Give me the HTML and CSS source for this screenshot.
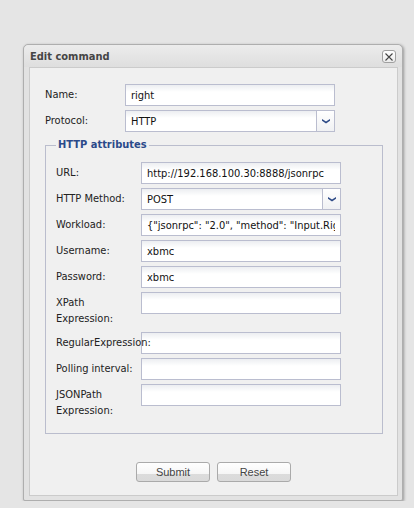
FILE: index.html
```html
<!DOCTYPE html>
<html>
<head>
<meta charset="utf-8">
<link rel="stylesheet" href="styles.css">
</head>
<body>
<div class="dialog">
  <div class="titlebar">
    <span class="title">Edit command</span>
    <span class="close"><svg width="8" height="8" viewBox="0 0 8 8"><path d="M0.5 0.5 L7.5 7.5 M7.5 0.5 L0.5 7.5" stroke="#444" stroke-width="1.1" fill="none"/></svg></span>
  </div>
  <div class="content">
    <div class="row top-row"><label class="lbl lbl-top">Name:</label><input class="field field-top" value="right"></div>
    <div class="row top-row"><label class="lbl lbl-top">Protocol:</label>
      <div class="field field-top select"><span class="sel-text">HTTP</span><span class="sel-btn"><svg width="8" height="5" viewBox="0 0 8 5"><path d="M0 0 L4 2.6 L8 0 L8 1.8 L4 4.6 L0 1.8 Z" fill="#2d4a86"/></svg></span></div>
    </div>
    <fieldset class="group">
      <legend class="legend">HTTP attributes</legend>
      <div class="row"><label class="lbl">URL:</label><input class="field" value="http://192.168.100.30:8888/jsonrpc"></div>
      <div class="row"><label class="lbl">HTTP Method:</label>
        <div class="field select"><span class="sel-text">POST</span><span class="sel-btn"><svg width="8" height="5" viewBox="0 0 8 5"><path d="M0 0 L4 2.6 L8 0 L8 1.8 L4 4.6 L0 1.8 Z" fill="#2d4a86"/></svg></span></div>
      </div>
      <div class="row"><label class="lbl">Workload:</label><input class="field" value='{"jsonrpc": "2.0", "method": "Input.Right", "id": 1}'></div>
      <div class="row"><label class="lbl">Username:</label><input class="field" value="xbmc"></div>
      <div class="row"><label class="lbl">Password:</label><input class="field" value="xbmc"></div>
      <div class="row"><label class="lbl lbl-wrap">XPath Expression:</label><input class="field" value=""></div>
      <div class="row"><label class="lbl lbl-over">RegularExpression:</label><input class="field" value=""></div>
      <div class="row"><label class="lbl">Polling interval:</label><input class="field" value=""></div>
      <div class="row last"><label class="lbl lbl-wrap">JSONPath Expression:</label><input class="field" value=""></div>
    </fieldset>
    <div class="buttons">
      <button class="btn">Submit</button>
      <button class="btn">Reset</button>
    </div>
  </div>
</div>
</body>
</html>
```
FILE: styles.css
```css
* { box-sizing: border-box; }
html, body { margin: 0; padding: 0; }
body {
  background: #e5e5e5;
  padding: 44px 0 0 23px;
  font-family: "DejaVu Sans Condensed", "DejaVu Sans", sans-serif;
  font-stretch: condensed;
  font-size: 11px;
  color: #222;
}
.dialog {
  width: 380px;
  height: 457px;
  background: #e2e2e2;
  border: 1px solid #aeaeae;
  border-radius: 5px 5px 2px 2px;
  box-shadow: 1px 1px 3px rgba(0,0,0,0.35);
  padding: 0 4px 4px 5px;
  display: flex;
  flex-direction: column;
}
.titlebar {
  height: 22px;
  flex: none;
  display: flex;
  align-items: center;
  justify-content: space-between;
  margin: 0 -4px 0 -5px;
  padding: 0 6px 0 6px;
  background: linear-gradient(#ececec, #dedede);
  border-radius: 5px 5px 0 0;
}
.title {
  font-weight: bold;
  font-size: 11px;
  color: #454545;
}
.close {
  width: 14px;
  height: 13px;
  border: 1px solid #a0a0a0;
  border-radius: 3px;
  background: linear-gradient(#ffffff, #ebebeb);
  display: flex;
  align-items: center;
  justify-content: center;
  margin-top: 1px;
}
.content {
  flex: 1;
  background: #f0f0f0;
  border: 1px solid #cbcbcb;
  padding: 16px 0 0 15px;
}
.row {
  display: flex;
  align-items: flex-start;
  margin-bottom: 4px;
}
.row.last { margin-bottom: 0; }
.lbl {
  flex: none;
  width: 85px;
  padding-top: 3px;
  line-height: 16px;
  white-space: nowrap;
  color: #222;
}
.lbl-top { width: 80px; }
.lbl-wrap { white-space: normal; padding-bottom: 1px; }
.lbl-over { position: relative; }
.field {
  flex: none;
  width: 200px;
  height: 22px;
  border: 1px solid #babdcf;
  background: linear-gradient(#eceef1 0, #ffffff 7px);
  font-family: "DejaVu Sans Condensed", "DejaVu Sans", sans-serif;
  font-stretch: condensed;
  font-size: 11px;
  color: #111;
  padding: 0 5px;
  margin: 0;
  outline: none;
}
.field-top { width: 210px; }
.select {
  display: flex;
  align-items: center;
  padding: 0 0 0 5px;
}
.sel-text { flex: 1; }
.sel-btn {
  width: 18px;
  height: 100%;
  border-left: 1px solid #babdcf;
  background: linear-gradient(#ffffff, #f0f1f3);
  display: flex;
  align-items: center;
  justify-content: center;
}
.group {
  width: 338px;
  margin: 6px 0 0 0;
  padding: 10px 0 13px 10px;
  border: 1px solid #babdcd;
}
.legend {
  padding: 0 2px;
  font-weight: bold;
  font-size: 11px;
  line-height: 14px;
  color: #2b4a8a;
}
.buttons {
  display: flex;
  justify-content: center;
  gap: 7px;
  margin: 28px 0 0 -15px;
}
.btn {
  width: 74px;
  height: 20px;
  border: 1px solid #aaaaaa;
  border-radius: 3px;
  background: linear-gradient(#fefefe 0, #f6f6f6 60%, #dcdcdc 60%, #dadada 100%);
  font-family: "Liberation Sans", Arial, sans-serif;
  font-size: 11px;
  color: #444;
  padding: 0;
}
```
